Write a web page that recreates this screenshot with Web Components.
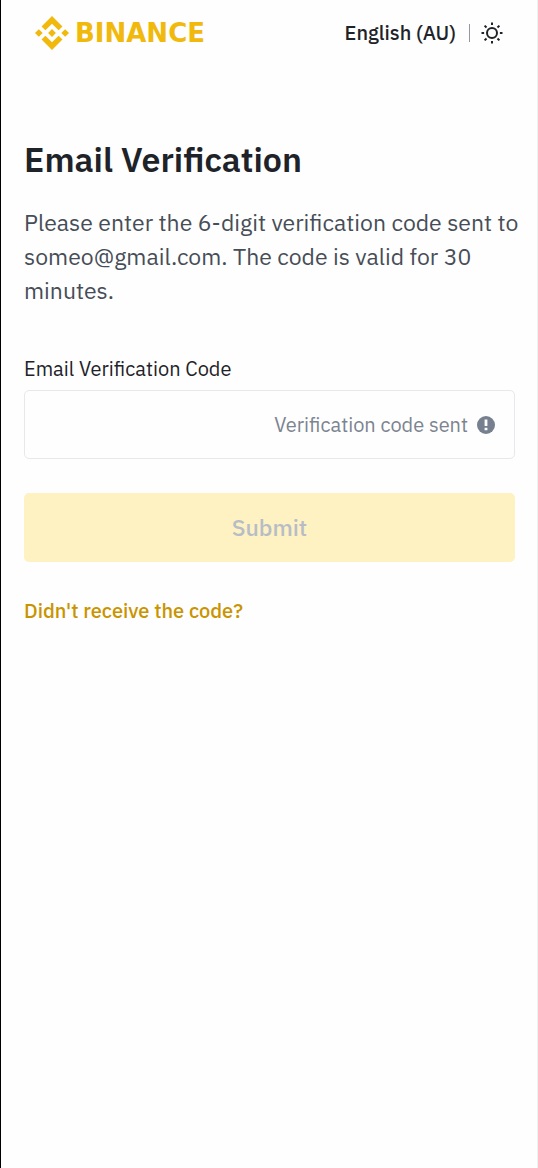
<!DOCTYPE html>
<html lang="en-AU">
<head>
<meta charset="utf-8">
<meta name="viewport" content="width=device-width, initial-scale=1">
<title>Email Verification</title>
<style>
  body {
    margin: 0;
    background: #fefefe;
    color: #1e2329;
    font-family: "IBM Plex Sans", Roboto, "Noto Sans", sans-serif;
  }
</style>
</head>
<body>
<verify-page>
  <site-header slot="header"></site-header>
  <page-intro>
    <span slot="title">Email Verification</span>
    Please enter the 6-digit verification code sent to someo@gmail.com. The code is valid for 30 minutes.
  </page-intro>
  <code-form></code-form>
</verify-page>

<template id="verify-page">
  <style>
    :host {
      display: block;
      box-sizing: border-box;
      min-height: 100vh;
      border-left: 1px solid #000;
      border-right: 1px solid #eeeff1;
    }
    main { padding: 71px 22px 48px 23px; }
  </style>
  <slot name="header"></slot>
  <main><slot></slot></main>
</template>

<template id="site-header">
  <style>
    :host { display: block; }
    header {
      display: flex;
      align-items: center;
      justify-content: space-between;
      height: 66px;
      padding: 0 33px 0 34px;
    }
    a {
      display: flex;
      align-items: center;
      gap: 6px;
      color: #f0b90b;
      font: 700 26px/34px "DejaVu Sans", sans-serif;
      text-decoration: none;
    }
    nav { display: flex; align-items: center; }
    button {
      display: block;
      border: 0;
      padding: 0;
      background: none;
      color: inherit;
      font: 500 20px/24px "IBM Plex Sans", Roboto, sans-serif;
      cursor: pointer;
    }
    .rule { width: 1px; height: 18px; margin: 0 10px 0 13px; background: #9299a3; }
    svg { display: block; }
  </style>
  <header>
    <a href="#" aria-label="Binance">
      <svg width="34" height="34" viewBox="0 0 126.61 126.61" fill="currentColor" aria-hidden="true">
        <path d="M38.73 53.2l24.59-24.58 24.6 24.6 14.3-14.31L63.32 0 24.42 38.9zM0 63.31L14.3 49l14.31 14.31-14.31 14.3zM38.73 73.41L63.32 98l24.6-24.6 14.31 14.29-38.91 38.91-38.9-38.88zM98 63.31L112.3 49l14.31 14.3-14.31 14.32zM77.83 63.3L63.32 48.78 48.81 63.28l14.51 14.5z"/>
      </svg>
      <span>BINANCE</span>
    </a>
    <nav aria-label="Preferences">
      <button type="button">English (AU)</button>
      <span class="rule"></span>
      <button type="button" aria-label="Switch theme">
        <svg width="24" height="24" viewBox="0 0 24 24" fill="none" stroke="#1e2329" stroke-width="2" aria-hidden="true">
          <circle cx="12" cy="12" r="5"/>
          <path d="M12 1.5v2.6M12 19.9v2.6M1.5 12h2.6M19.9 12h2.6M4.6 4.6l1.9 1.9M17.5 17.5l1.9 1.9M4.6 19.4l1.9-1.9M17.5 6.5l1.9-1.9"/>
        </svg>
      </button>
    </nav>
  </header>
</template>

<template id="page-intro">
  <style>
    :host { display: block; }
    h1 { margin: 0; font-size: 34px; line-height: 44px; font-weight: 600; }
    p { margin: 24px -8px 0 0; color: #474d57; font-size: 23px; line-height: 34px; }
  </style>
  <h1><slot name="title"></slot></h1>
  <p><slot></slot></p>
</template>

<template id="code-form">
  <style>
    :host { display: block; margin-top: 50px; }
    form { display: flex; flex-direction: column; }
    label { font-size: 20px; line-height: 24px; }
    .field {
      display: flex;
      align-items: center;
      box-sizing: border-box;
      height: 69px;
      margin-top: 9px;
      padding: 0 18px;
      border: 1px solid #e6e8ea;
      border-radius: 5px;
      color: #848e9c;
    }
    input {
      flex: 1;
      min-width: 0;
      height: 48px;
      border: 0;
      padding: 0;
      outline: 0;
      background: none;
      color: #1e2329;
      font: 23px/34px "IBM Plex Sans", Roboto, sans-serif;
    }
    .status { color: #7c8490; font-size: 20px; line-height: 24px; }
    .field svg { margin-left: 8px; }
    button {
      height: 69px;
      margin-top: 34px;
      padding: 0 0 2px;
      border: 0;
      border-radius: 5px;
      background: #fef1c2;
      color: #b7bdc6;
      font: 500 23px/34px "IBM Plex Sans", Roboto, sans-serif;
    }
    a {
      align-self: flex-start;
      margin-top: 37px;
      color: #c99400;
      font-size: 20px;
      line-height: 24px;
      font-weight: 500;
      text-decoration: none;
    }
  </style>
  <form>
    <label for="code">Email Verification Code</label>
    <div class="field">
      <input id="code" type="text" inputmode="numeric" maxlength="6" autocomplete="one-time-code">
      <span class="status">Verification code sent</span>
      <svg width="20" height="20" viewBox="0 0 20 20" aria-hidden="true">
        <circle cx="10" cy="10" r="9" fill="#76808f"/>
        <path d="M8.6 4.5h2.8v6.6H8.6zM8.6 12.7h2.8v2.6H8.6z" fill="#fefefe"/>
      </svg>
    </div>
    <button type="submit" disabled>Submit</button>
    <a href="#">Didn't receive the code?</a>
  </form>
</template>

<script>
  class TemplateElement extends HTMLElement {
    constructor() {
      super();
      const template = document.getElementById(this.localName);
      this.attachShadow({ mode: "open" }).append(template.content.cloneNode(true));
    }
  }

  customElements.define("verify-page", class extends TemplateElement {});
  customElements.define("site-header", class extends TemplateElement {});
  customElements.define("page-intro", class extends TemplateElement {});
  customElements.define("code-form", class extends TemplateElement {
    connectedCallback() {
      const input = this.shadowRoot.querySelector("input");
      const button = this.shadowRoot.querySelector("button");
      input.addEventListener("input", () => {
        button.disabled = !/^\d{6}$/.test(input.value);
      });
    }
  });
</script>
</body>
</html>
